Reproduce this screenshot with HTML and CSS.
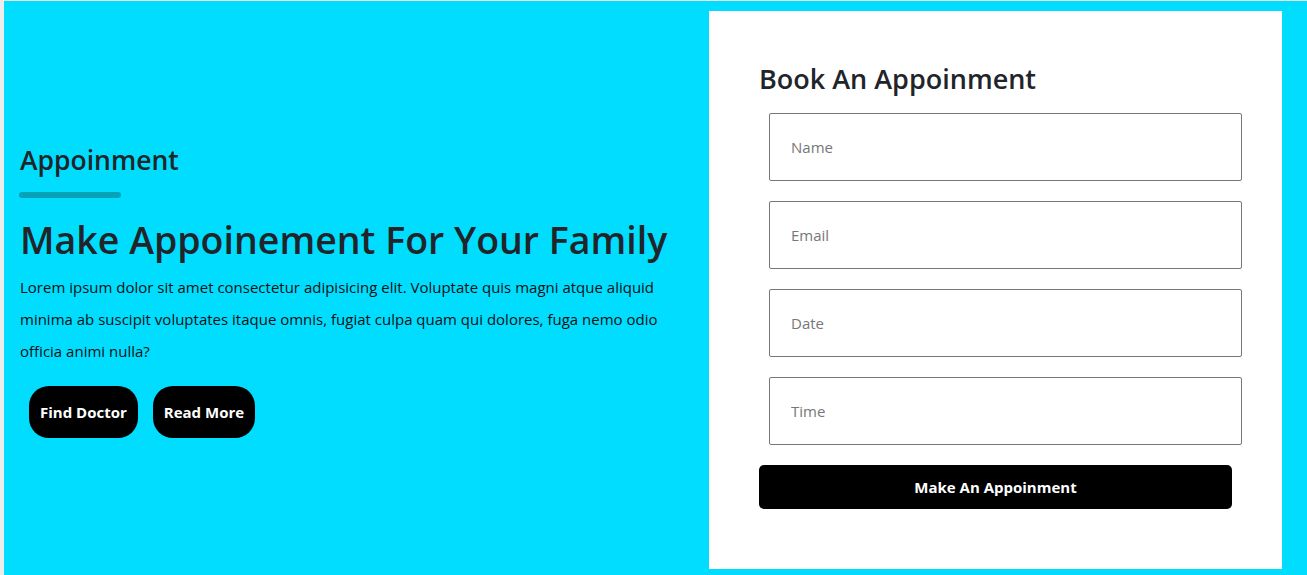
FILE: index.html
```html
<!DOCTYPE html>
<html>
<head>
<meta charset="utf-8">
<link rel="stylesheet" href="styles.css">
</head>
<body>
<section class="page">
  <div class="intro">
    <h3 class="eyebrow">Appoinment</h3>
    <span class="bar"></span>
    <h1 class="title">Make Appoinement For Your Family</h1>
    <p class="text">Lorem ipsum dolor sit amet consectetur adipisicing elit. Voluptate quis magni atque aliquid minima ab suscipit voluptates itaque omnis, fugiat culpa quam qui dolores, fuga nemo odio officia animi nulla?</p>
    <div class="actions">
      <button class="pill">Find Doctor</button>
      <button class="pill">Read More</button>
    </div>
  </div>
  <div class="card">
    <h2 class="card-title">Book An Appoinment</h2>
    <form class="form">
      <input class="field" type="text" placeholder="Name">
      <input class="field" type="text" placeholder="Email">
      <input class="field" type="text" placeholder="Date">
      <input class="field" type="text" placeholder="Time">
      <button class="submit" type="button">Make An Appoinment</button>
    </form>
  </div>
</section>
</body>
</html>
```

FILE: styles.css
```css
* { box-sizing: border-box; }
html, body { margin: 0; padding: 0; }
body {
  background: #ececec;
  font-family: "Open Sans", "Noto Sans", sans-serif;
  color: #212529;
}
.page {
  margin: 1px 0 0 4px;
  height: 574px;
  background: #00ddff;
  display: flex;
}
.intro {
  flex: 1;
  padding: 4px 30px 0 16px;
  display: flex;
  flex-direction: column;
  justify-content: center;
}
.eyebrow {
  margin: 0;
  font-size: 26.5px;
  font-weight: 600;
  line-height: 34px;
}
.bar {
  display: block;
  width: 102px;
  height: 6px;
  border-radius: 3px;
  background: #06a3b8;
  margin: 15px 0 19px -1px;
}
.title {
  margin: 0;
  font-size: 37.5px;
  font-weight: 600;
  line-height: 46px;
  white-space: nowrap;
}
.text {
  margin: 8px 0 0;
  font-size: 15px;
  line-height: 32px;
  color: #111;
}
.actions {
  display: flex;
  gap: 15px;
  margin: 19px 0 0 9px;
}
.pill {
  height: 52px;
  padding: 0 11px;
  border: none;
  border-radius: 20px;
  background: #000;
  color: #fff;
  font-family: inherit;
  font-size: 15px;
  font-weight: 700;
}
.card {
  width: 573px;
  margin: 10px 25px 6px 0;
  background: #fff;
  padding: 50px 50px 0 50px;
}
.card-title {
  margin: 0 0 16px;
  font-size: 27px;
  font-weight: 600;
  line-height: 36px;
}
.form {
  display: flex;
  flex-direction: column;
  gap: 20px;
}
.field {
  width: 473px;
  height: 68px;
  margin-left: 10px;
  border: 1px solid #777;
  border-radius: 2px;
  padding: 0 21px;
  font-family: inherit;
  font-size: 15px;
  color: #333;
  outline: none;
}
.field::placeholder { color: #777; }
.submit {
  width: 473px;
  height: 44px;
  border: none;
  border-radius: 5px;
  background: #000;
  color: #fff;
  font-family: inherit;
  font-size: 15px;
  font-weight: 700;
}
```
